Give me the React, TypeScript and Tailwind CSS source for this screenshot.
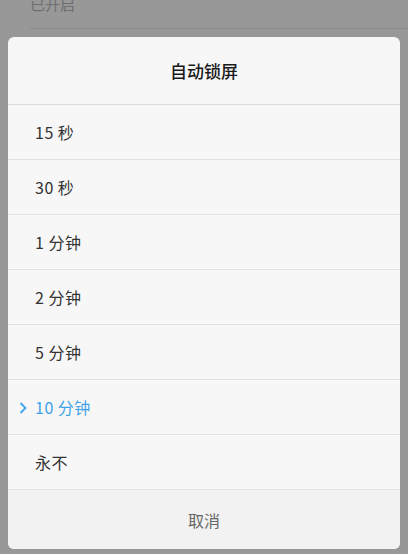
const options = ["15 秒", "30 秒", "1 分钟", "2 分钟", "5 分钟", "10 分钟", "永不"];
const selected = "10 分钟";

export default function App() {
  return (
    <div
      className="w-[408px] h-[554px] overflow-hidden bg-[#989898] flex flex-col"
      style={{ fontFamily: '"Noto Sans CJK SC", "Noto Sans", sans-serif' }}
    >
      <div className="ml-[30px] h-[29px] border-b border-[#8c8c8c] flex items-start">
        <p className="-mt-[6px] text-[15px] leading-[20px] text-[#6e6e6e]">已开启</p>
      </div>

      <div className="mx-[8px] mt-[8px] h-[512px] rounded-[6px] overflow-hidden bg-[#f7f7f7] flex flex-col">
        <div className="h-[68px] flex items-center justify-center border-b border-[#dcdcdc]">
          <h2 className="text-[17px] text-[#1a1a1a] font-medium">自动锁屏</h2>
        </div>

        {options.map((opt) => {
          const active = opt === selected;
          return (
            <div
              key={opt}
              className="relative h-[55px] flex items-center border-b border-[#e2e2e2] pl-[27px]"
            >
              {active && (
                <svg
                  className="absolute left-[11px] top-[22px]"
                  width="8"
                  height="12"
                  viewBox="0 0 8 12"
                  fill="none"
                >
                  <path d="M1.5 1 L6.5 6 L1.5 11" stroke="#3fa2e6" strokeWidth="1.8" />
                </svg>
              )}
              <span
                className={
                  active
                    ? "text-[16px] tracking-[0.5px] text-[#3fa2e6]"
                    : "text-[16px] tracking-[0.5px] text-[#333333]"
                }
              >
                {opt}
              </span>
            </div>
          );
        })}

        <div className="flex-1 flex items-center justify-center bg-[#f2f2f2] border-t border-[#d6d6d6] -mt-px">
          <span className="text-[16px] text-[#666666]">取消</span>
        </div>
      </div>
    </div>
  );
}
